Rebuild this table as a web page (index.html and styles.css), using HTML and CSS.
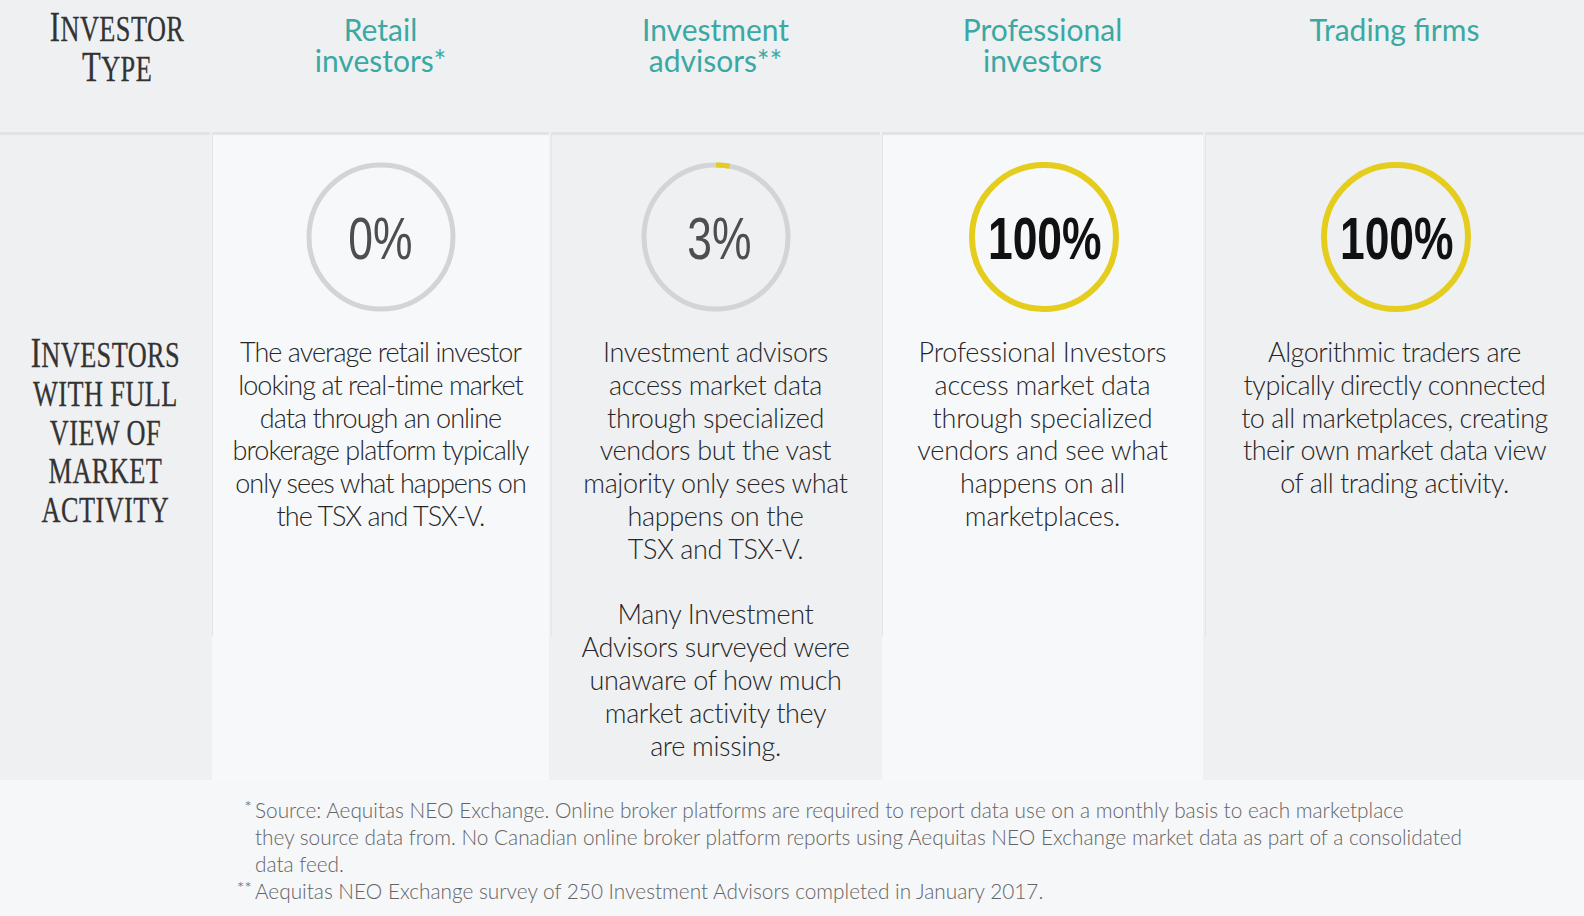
FILE: index.html
```html
<!DOCTYPE html>
<html lang="en">
<head>
<meta charset="utf-8">
<title>Investors with full view of market activity</title>
<link rel="stylesheet" href="styles.css">
</head>
<body>
<div class="table">
  <div class="head head-label">
    <div class="sc"><span class="ini">I</span>NVESTOR<br><span class="ini">T</span>YPE</div>
  </div>
  <div class="head head-col"><span class="hl">Retail</span><span class="hl">investors*</span></div>
  <div class="head head-col"><span class="hl">Investment</span><span class="hl">advisors**</span></div>
  <div class="head head-col"><span class="hl">Professional</span><span class="hl">investors</span></div>
  <div class="head head-col"><span class="hl">Trading firms</span></div>

  <div class="cell cell-label">
    <div class="sc"><span class="ini">I</span>NVESTORS<br>WITH FULL<br>VIEW OF<br>MARKET<br>ACTIVITY</div>
  </div>

  <div class="cell col-light">
    <div class="ring">
      <svg class="ring-svg" viewBox="0 0 150 150" width="150" height="150">
        <circle cx="75" cy="75" r="72" class="track"/>
      </svg>
      <span class="pct pct-grey">0%</span>
    </div>
    <p class="desc tight">The average retail investor<br>looking at real-time market<br>data through an online<br>brokerage platform typically<br>only sees what happens on<br>the TSX and TSX-V.</p>
  </div>

  <div class="cell col-dark">
    <div class="ring">
      <svg class="ring-svg" viewBox="0 0 150 150" width="150" height="150">
        <circle cx="75" cy="75" r="72" class="track"/>
        <circle cx="75" cy="75" r="72" class="arc" stroke-dasharray="13.6 452.8" transform="rotate(-90 75 75)"/>
      </svg>
      <span class="pct pct-grey pct-shift">3%</span>
    </div>
    <p class="desc mid">Investment advisors<br>access market data<br>through specialized<br>vendors but the vast<br>majority only sees what<br>happens on the<br>TSX and TSX-V.</p>
    <p class="desc mid desc-more">Many Investment<br>Advisors surveyed were<br>unaware of how much<br>market activity they<br>are missing.</p>
  </div>

  <div class="cell col-light">
    <div class="ring">
      <svg class="ring-svg" viewBox="0 0 150 150" width="150" height="150">
        <circle cx="75" cy="75" r="72" class="full"/>
      </svg>
      <span class="pct pct-dark">100%</span>
    </div>
    <p class="desc semi">Professional Investors<br>access market data<br>through specialized<br>vendors and see what<br>happens on all<br>marketplaces.</p>
  </div>

  <div class="cell col-dark">
    <div class="ring">
      <svg class="ring-svg" viewBox="0 0 150 150" width="150" height="150">
        <circle cx="75" cy="75" r="72" class="full"/>
      </svg>
      <span class="pct pct-dark">100%</span>
    </div>
    <p class="desc snug">Algorithmic traders are<br>typically directly connected<br>to all marketplaces, creating<br>their own market data view<br>of all trading activity.</p>
  </div>
</div>

<footer class="notes">
  <div class="note"><span class="mark">*</span><span class="note-text">Source: Aequitas NEO Exchange. Online broker platforms are required to report data use on a monthly basis to each marketplace<br>they source data from. No Canadian online broker platform reports using Aequitas NEO Exchange market data as part of a consolidated<br>data feed.</span></div>
  <div class="note"><span class="mark">**</span><span class="note-text">Aequitas NEO Exchange survey of 250 Investment Advisors completed in January 2017.</span></div>
</footer>
</body>
</html>
```

FILE: styles.css
```css
* { box-sizing: border-box; }

html, body {
  margin: 0;
  padding: 0;
}

body {
  background: #eff0f2;
  font-family: Lato, "Open Sans", sans-serif;
  color: #333;
  width: 1584px;
  height: 916px;
  overflow: hidden;
}

.table {
  display: grid;
  grid-template-columns: 210px 337px 329px 321px 1fr;
  grid-template-rows: 132px 648px;
  column-gap: 2px;
}

.head {
  text-align: center;
}

.head-label {
  padding: 9px 0 0 24px;
  line-height: 40.4px;
}

.sc {
  display: inline-block;
  font-family: "Liberation Serif", "DejaVu Serif", serif;
  font-size: 36px;
  color: #333;
  transform: scaleX(0.73);
  letter-spacing: 0.6px;
  white-space: nowrap;
  -webkit-text-stroke: 0.3px #333;
}

.ini {
  font-size: 42px;
  line-height: 20px;
}

.head-col {
  padding-top: 13.6px;
  font-size: 30px;
  line-height: 31.3px;
  color: #3aa8a3;
  font-weight: 400;
}

.hl {
  display: block;
  height: 31.3px;
  white-space: nowrap;
}

.cell {
  border-top: 3px solid #e2e3e6;
  background-image: linear-gradient(#e3e4e7, #e3e4e7);
  background-size: 1px 501px;
  background-repeat: no-repeat;
  background-position: left top;
  display: flex;
  flex-direction: column;
  align-items: center;
}

.cell-label {
  background-image: none;
  padding-top: 201px;
  line-height: 38.8px;
  text-align: center;
}

.col-light {
  background-color: #f7f8fa;
}

.col-dark {
  background-color: #eff0f2;
}

.ring {
  display: grid;
  place-items: center;
  width: 150px;
  height: 150px;
  margin-top: 27px;
}

.ring > * {
  grid-area: 1 / 1;
}

.ring-svg {
  display: block;
}

.track {
  fill: none;
  stroke: #d4d4d4;
  stroke-width: 5;
}

.arc {
  fill: none;
  stroke: #e3cc1b;
  stroke-width: 5;
}

.full {
  fill: none;
  stroke: #e5cd1d;
  stroke-width: 6;
}

.pct {
  display: inline-block;
  font-family: "Liberation Sans", Arial, sans-serif;
  font-size: 60px;
  line-height: 1;
  transform: scaleX(0.74);
  padding-top: 3px;
}

.pct-shift {
  margin-left: 8px;
}

.pct-grey {
  color: #4e4e4e;
}

.pct-dark {
  color: #111;
  font-weight: 700;
}

.desc {
  margin: 24px 0 0;
  font-size: 27px;
  line-height: 32.8px;
  font-weight: 300;
  color: #262626;
  text-align: center;
  white-space: nowrap;
}

.tight {
  letter-spacing: -0.95px;
}

.mid {
  letter-spacing: -0.35px;
}

.semi {
  letter-spacing: -0.2px;
}

.snug {
  letter-spacing: -0.5px;
}

.desc-more {
  margin-top: 32.8px;
}

.notes {
  background: #f6f7f9;
  height: 136px;
  padding-top: 16px;
  font-size: 20.8px;
  line-height: 27px;
  font-weight: 300;
  color: #646464;
}

.note {
  display: flex;
  padding-left: 226px;
}

.mark {
  width: 29px;
  padding-right: 3px;
  text-align: right;
  font-size: 18px;
  line-height: 22px;
}

.note-text {
  white-space: nowrap;
}
```
